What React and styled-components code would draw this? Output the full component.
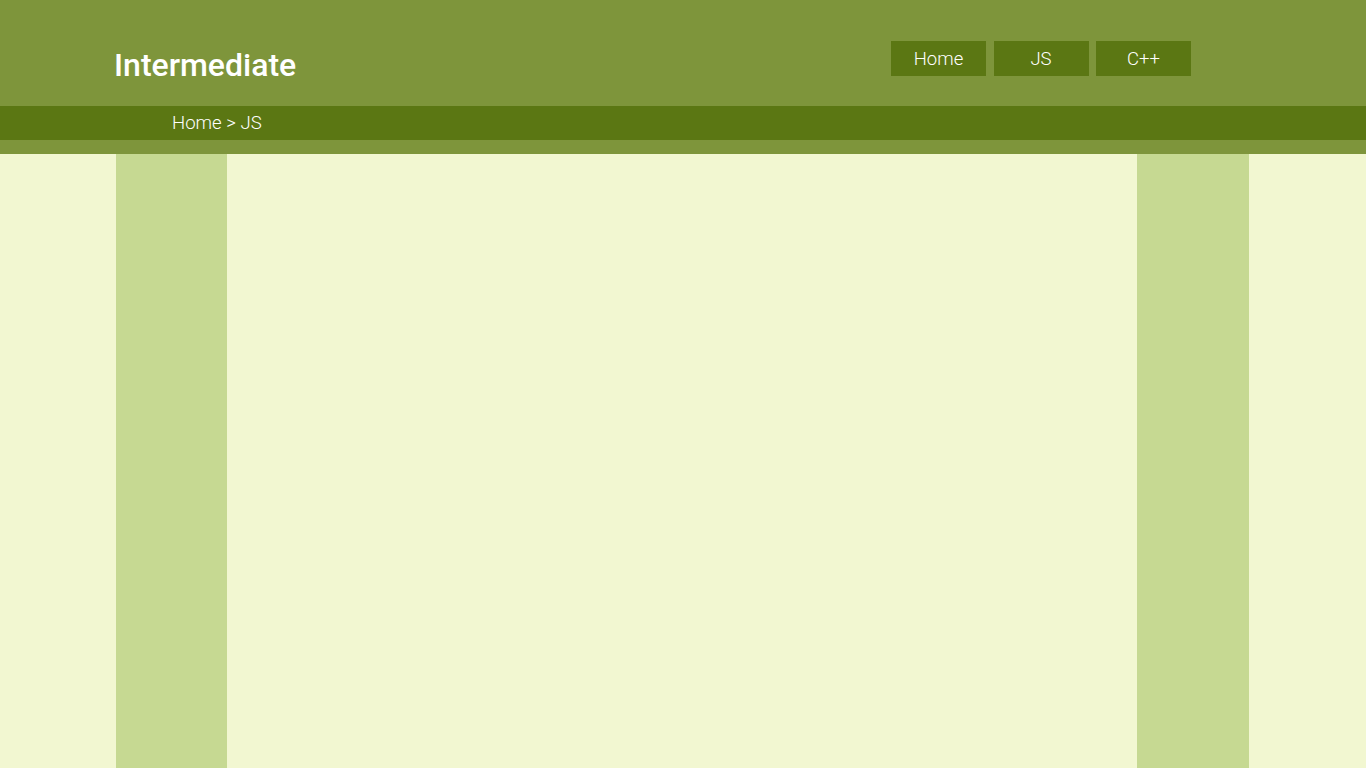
import React from 'react';
import styled, { createGlobalStyle } from 'styled-components';

const GlobalStyle = createGlobalStyle`
  body {
    margin: 0;
    background: #f2f7d1;
    font-family: Roboto, 'Open Sans', sans-serif;
  }
`;

const Header = styled.header`
  height: 106px;
  background: #7e953b;
  display: flex;
  justify-content: space-between;
  align-items: flex-start;
  padding: 0 175px 0 114px;
  box-sizing: border-box;
`;

const Title = styled.h1`
  margin: 45px 0 0;
  font-size: 32px;
  font-weight: 500;
  line-height: 40px;
  color: #fff;
`;

const Nav = styled.nav`
  display: flex;
  gap: 7.5px;
  margin-top: 41px;
`;

const NavButton = styled.a`
  width: 95px;
  height: 35px;
  display: flex;
  align-items: center;
  justify-content: center;
  background: #5b7713;
  color: #fff;
  font-size: 18.5px;
  font-weight: 300;
  text-decoration: none;
  cursor: pointer;
`;

const Breadcrumb = styled.div`
  height: 34px;
  background: #5b7713;
  color: #fff;
  font-size: 18.6px;
  font-weight: 300;
  line-height: 34px;
  padding-left: 172px;
`;

const Band = styled.div`
  height: 14px;
  background: #7e953b;
`;

const Body = styled.div`
  display: grid;
  grid-template-columns: 116px 111px 910px 112px 1fr;
  min-height: 614px;
`;

const Sidebar = styled.aside`
  background: #c6d992;
`;

const Main = styled.main`
  background: #f2f7d1;
`;

export default function App() {
  return (
    <>
      <GlobalStyle />
      <Header>
        <Title>Intermediate</Title>
        <Nav>
          <NavButton>Home</NavButton>
          <NavButton>JS</NavButton>
          <NavButton>C++</NavButton>
        </Nav>
      </Header>
      <Breadcrumb>Home &gt; JS</Breadcrumb>
      <Band />
      <Body>
        <div />
        <Sidebar />
        <Main />
        <Sidebar />
        <div />
      </Body>
    </>
  );
}
